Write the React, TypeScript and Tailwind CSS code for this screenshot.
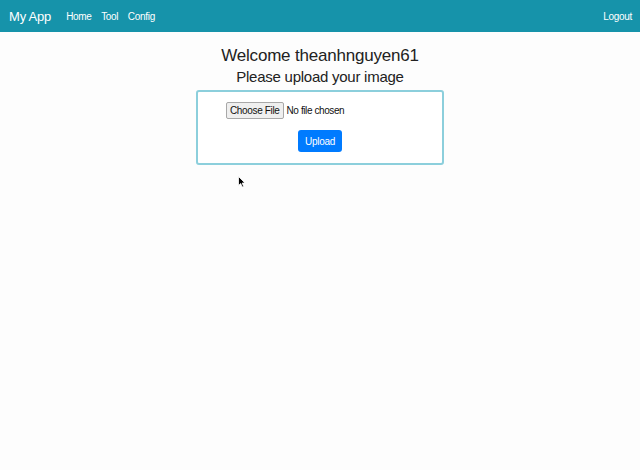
import React from "react";

export default function App() {
  return (
    <div className="min-h-[470px] w-full bg-[#fdfdfd]" style={{ fontFamily: '"Liberation Sans", Arial, sans-serif' }}>
      <nav className="flex h-8 items-center justify-between bg-[#1693aa] pl-[9px] pr-[8px] text-white">
        <div className="flex items-center">
          <span className="text-[13px] leading-none tracking-[-0.2px]">My App</span>
          <div className="ml-[15px] flex gap-[9.5px] text-[10px] tracking-[-0.3px]">
            <span>Home</span>
            <span>Tool</span>
            <span>Config</span>
          </div>
        </div>
        <span className="text-[10px] tracking-[-0.3px]">Logout</span>
      </nav>
      <div className="flex flex-col items-center">
        <h1 className="mt-[14px] text-[17px] leading-[20px] tracking-[-0.2px] text-[#222]">Welcome theanhnguyen61</h1>
        <h2 className="mt-[2px] text-[15px] leading-[18px] tracking-[-0.25px] text-[#222]">Please upload your image</h2>
        <div className="mt-[4px] flex w-[248px] flex-col rounded-[3px] border-2 border-[#8ccfdc] bg-white pb-[11px]">
          <div className="ml-[28px] mt-[10px] flex items-center text-[#111]">
            <span className="rounded-[2px] border border-[#a8a8a8] bg-[#efefef] px-[3px] py-[1px] text-[10px] leading-[13px] tracking-[-0.35px]">Choose File</span>
            <span className="ml-[3px] text-[10px] tracking-[-0.4px]">No file chosen</span>
          </div>
          <div className="mt-[11px] flex justify-center">
            <span className="flex h-[22px] w-[44px] items-center justify-center rounded-[3px] bg-[#007bff] text-[10px] tracking-[-0.3px] text-white">Upload</span>
          </div>
        </div>
        <svg className="ml-[-156px] mt-[11px]" width="8" height="12" viewBox="0 0 8 12">
          <path d="M0.5 0.5 L0.5 9.5 L2.7 7.5 L4.2 11 L5.6 10.4 L4.2 7 L7 7 Z" fill="#000" stroke="#fff" strokeWidth="0.8" />
        </svg>
      </div>
    </div>
  );
}
